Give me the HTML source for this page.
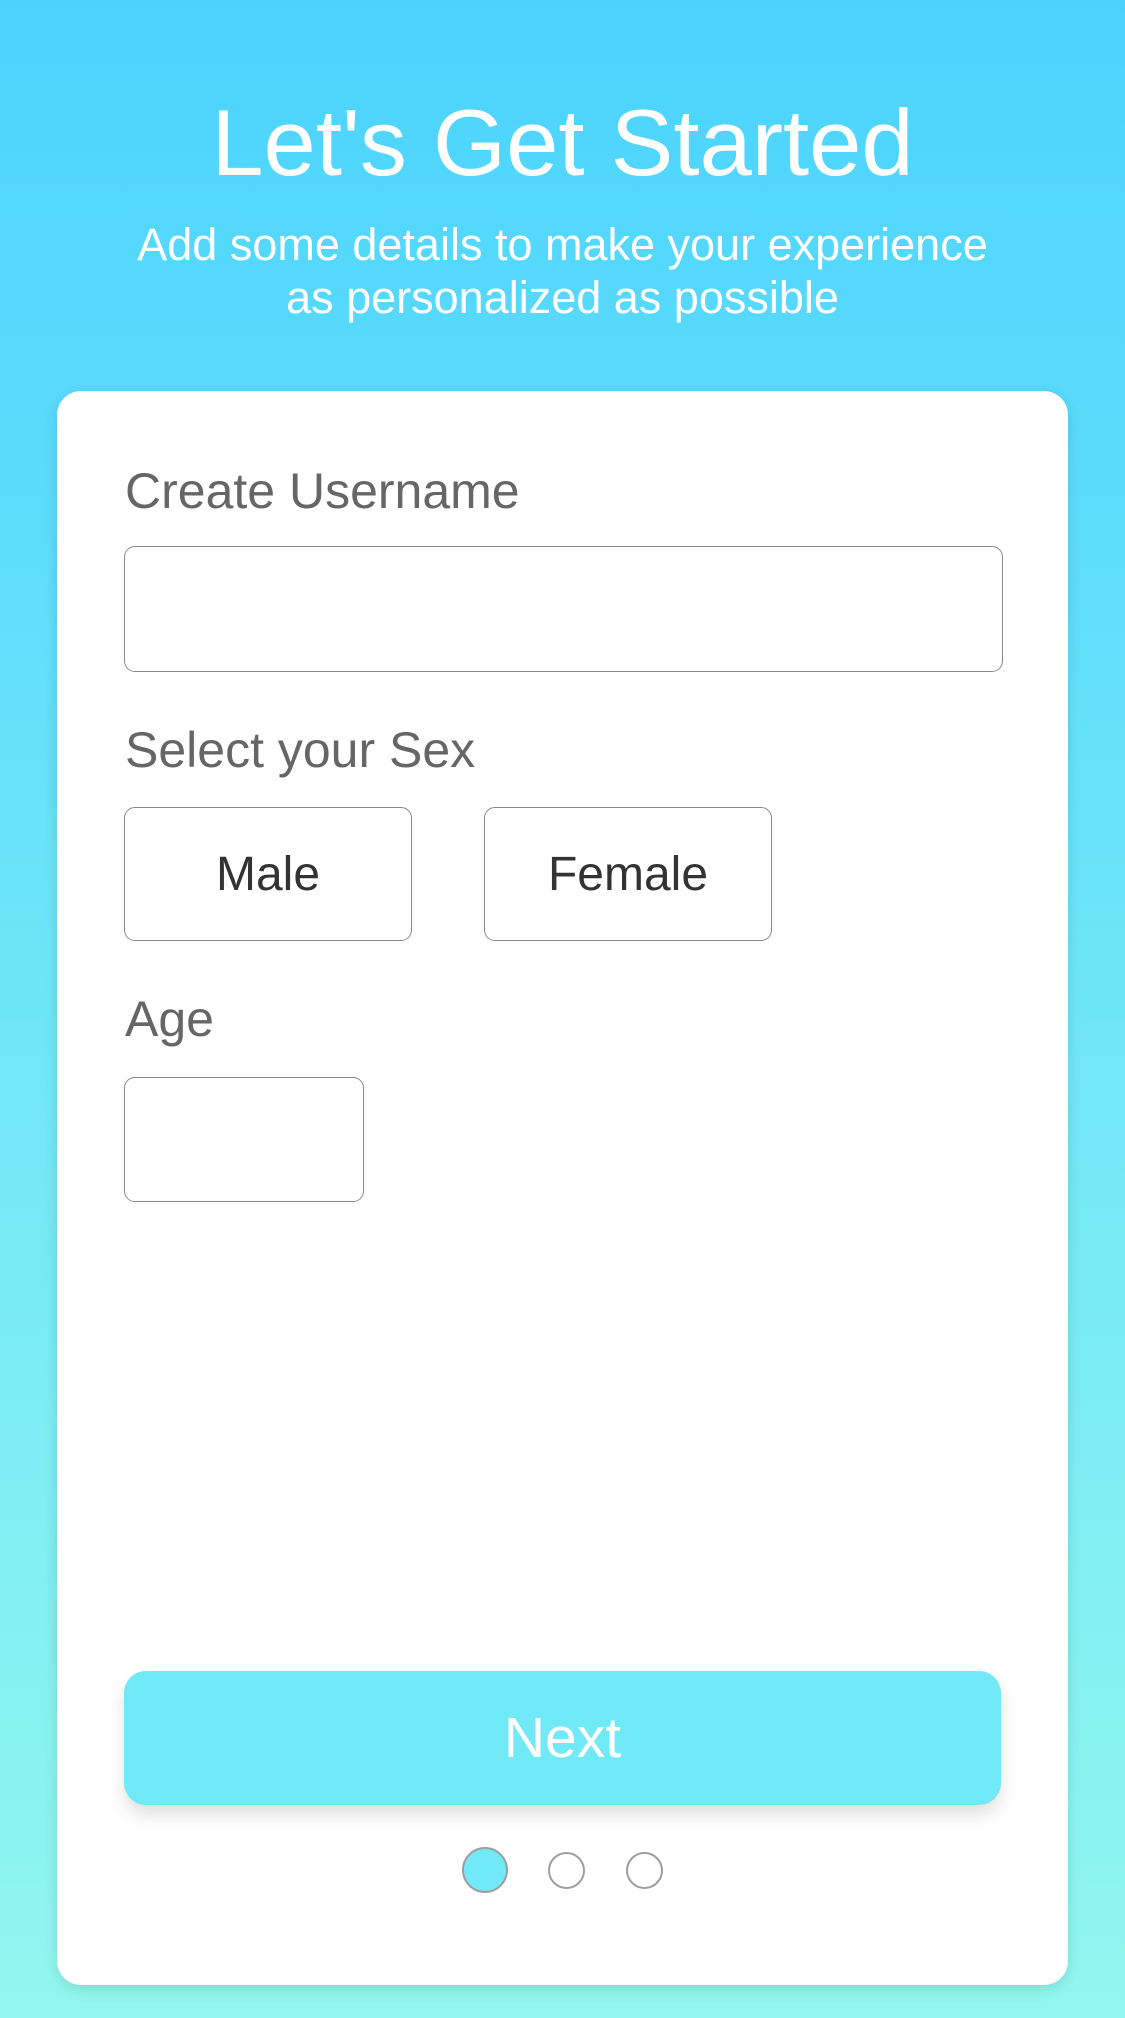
<!DOCTYPE html>
<html><head><meta charset="utf-8">
<style>
html,body{margin:0;padding:0}
body{width:1125px;height:2018px;position:relative;overflow:hidden;
background:linear-gradient(180deg,#4bd3fe 0%,#6fe6f8 50%,#92f7ee 100%);
font-family:"Liberation Sans",Arial,sans-serif}
.abs{position:absolute}
.title{left:0;width:1125px;top:96px;text-align:center;color:#fff;font-size:94px;line-height:1}
.sub{left:0;width:1125px;top:218px;text-align:center;color:#fff;font-size:45px;line-height:53px}
.card{left:57px;top:391px;width:1011px;height:1594px;background:#fff;border-radius:24px;box-shadow:0 4px 14px rgba(0,0,0,0.12)}
.lab{left:125px;color:#666;font-size:50px;line-height:1}
.box{border:1.5px solid #8a8a8a;border-radius:11px;box-sizing:border-box;background:#fff}
.opt{display:flex;align-items:center;justify-content:center;color:#333;font-size:48px}
.btn{left:124px;top:1671px;width:877px;height:134px;background:#71e9f7;border-radius:22px;box-shadow:0 10px 16px rgba(0,0,0,0.12);
display:flex;align-items:center;justify-content:center;color:#fff;font-size:57px}
.dot{border:2px solid #9e9e9e;border-radius:50%;box-sizing:border-box;background:#fff}
</style></head><body>
<div class="abs title">Let's Get Started</div>
<div class="abs sub">Add some details to make your experience<br>as personalized as possible</div>
<div class="abs card"></div>
<div class="abs lab" style="top:466px">Create Username</div>
<div class="abs box" style="left:124px;top:546px;width:879px;height:126px"></div>
<div class="abs lab" style="top:725px">Select your Sex</div>
<div class="abs box opt" style="left:124px;top:807px;width:288px;height:134px">Male</div>
<div class="abs box opt" style="left:484px;top:807px;width:288px;height:134px">Female</div>
<div class="abs lab" style="top:994px">Age</div>
<div class="abs box" style="left:124px;top:1077px;width:240px;height:125px"></div>
<div class="abs btn">Next</div>
<div class="abs dot" style="left:462px;top:1847px;width:46px;height:46px;background:#71e9f7"></div>
<div class="abs dot" style="left:548px;top:1852px;width:37px;height:37px"></div>
<div class="abs dot" style="left:626px;top:1852px;width:37px;height:37px"></div>
</body></html>
